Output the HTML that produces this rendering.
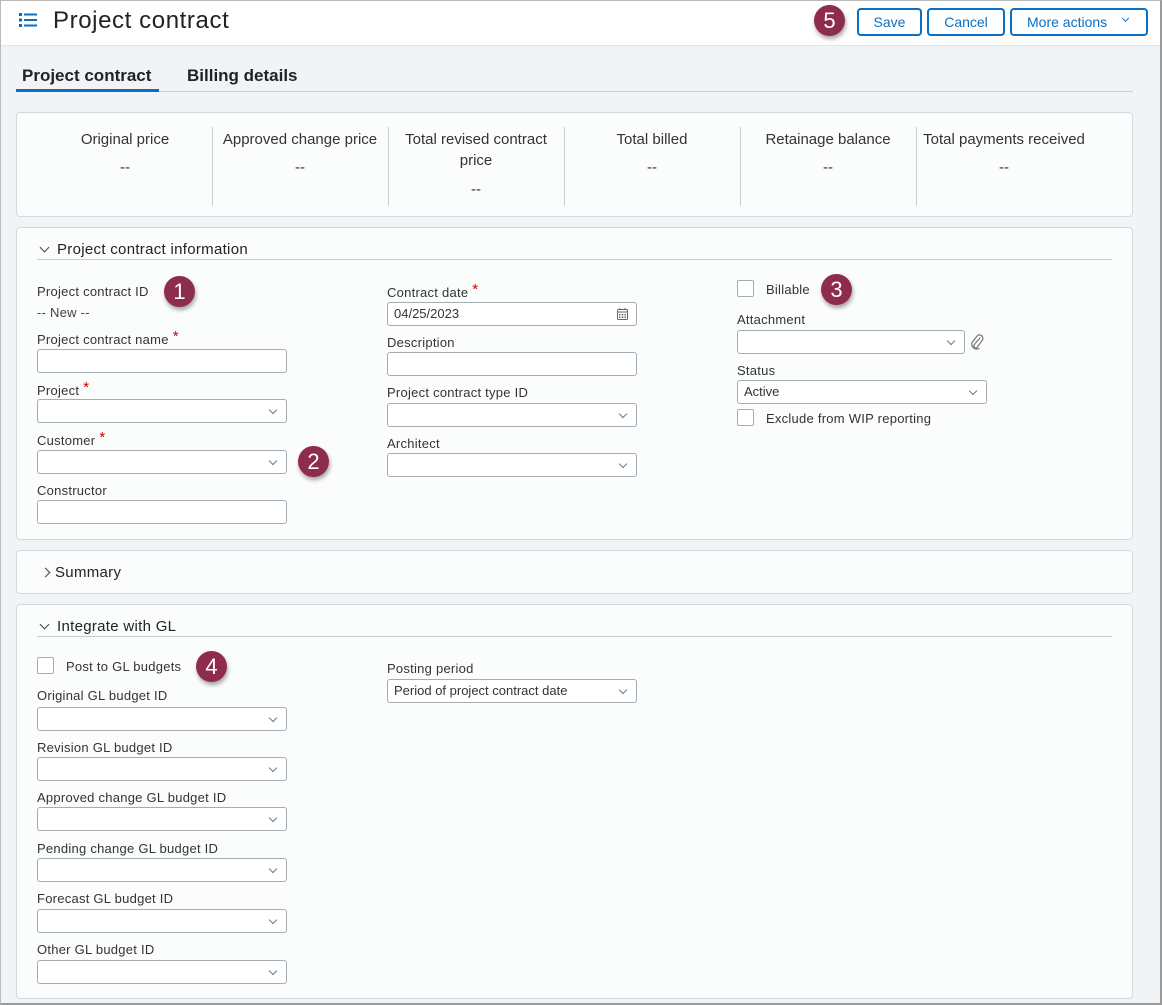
<!DOCTYPE html>
<html><head><meta charset="utf-8"><style>
*{box-sizing:border-box;margin:0;padding:0}
body{width:1162px;height:1005px;background:#f1f4f6;font-family:"Liberation Sans",Arial,sans-serif;color:#333;position:relative;overflow:hidden}
.a{position:absolute}
.frame{position:absolute;left:0;top:0;width:1162px;height:1005px;border-right:2px solid #9a9a9a;border-bottom:2px solid #9a9a9a;border-top:1px solid #bbb;border-left:1px solid #bbb;pointer-events:none;z-index:10}
.hdr{left:0;top:0;width:1162px;height:46px;background:#fff;border-bottom:1px solid #e1e5e8}
.card{background:#fbfcfc;border:1px solid #d3d9de;border-radius:4px}
.btn{top:8px;height:28px;border:2px solid #0a6fc2;border-radius:4px;color:#0a6fc2;font-size:14px;line-height:24px;text-align:center;background:#fff}
.lbl{font-size:13px;color:#333;white-space:nowrap;letter-spacing:0.25px}
.req{color:#c00;font-size:15px;margin-left:4px;position:relative;top:-3px}
.in{width:250px;height:24px;border:1px solid #a4adb5;border-radius:3px;background:#fff;font-size:13px;line-height:22px;padding-left:6px}
.sel::after{content:"";position:absolute;right:10px;top:7px;width:5px;height:5px;border-right:1px solid #777;border-bottom:1px solid #777;transform:rotate(45deg)}
.cb{width:17px;height:17px;border:1px solid #a4adb5;background:#fff;border-radius:2px}
.badge{width:31px;height:31px;border-radius:50%;background:#8e2c4c;color:#fff;font-size:22px;line-height:31px;text-align:center;box-shadow:1px 3px 4px rgba(0,0,0,.35)}
.sum{font-size:15px;color:#333;text-align:center;width:176px}
.vd{width:1px;background:#c8cdd1;top:127px;height:79px}
.sec{font-size:15px;color:#222;letter-spacing:0.3px}
.hr{height:1px;background:#c8cdd1}
.chev{display:inline-block;width:7px;height:7px;border-right:1.3px solid #444;border-bottom:1.3px solid #444;transform:rotate(45deg);margin-right:9px;position:relative;top:-3px}
.chevr{display:inline-block;width:7px;height:7px;border-right:1.3px solid #444;border-bottom:1.3px solid #444;transform:rotate(-45deg);margin-right:6px;position:relative;top:-1px}
.tab{font-size:17px;color:#222;font-weight:bold}
</style></head><body>
<div class="a hdr"></div>
<svg class="a" style="left:19px;top:12px" width="19" height="16" viewBox="0 0 19 16"><g fill="#0a6fc2"><rect x="0" y="1" width="3" height="3"/><rect x="5" y="1.5" width="13" height="2"/><rect x="0" y="6.5" width="3" height="3"/><rect x="5" y="7" width="13" height="2"/><rect x="0" y="12" width="3" height="3"/><rect x="5" y="12.5" width="13" height="2"/></g></svg>
<div class="a" style="left:53px;top:7px;font-size:24px;color:#222;letter-spacing:0.6px">Project contract</div>
<div class="a badge" style="left:814px;top:5px">5</div>
<div class="a btn" style="left:857px;width:65px">Save</div>
<div class="a btn" style="left:927px;width:78px">Cancel</div>
<div class="a btn" style="left:1010px;width:138px;text-align:left;padding-left:15px">More actions<span style="position:absolute;right:18px;top:6px;width:5px;height:5px;border-right:1px solid #0a6fc2;border-bottom:1px solid #0a6fc2;transform:rotate(45deg)"></span></div>

<div class="a tab" style="left:22px;top:66px">Project contract</div>
<div class="a tab" style="left:187px;top:66px">Billing details</div>
<div class="a" style="left:16px;top:91px;width:1117px;height:1px;background:#c8cdd1"></div>
<div class="a" style="left:16px;top:89px;width:143px;height:3px;background:#0a6fc2"></div>

<div class="a card" style="left:16px;top:112px;width:1117px;height:105px"></div>
<div class="a sum" style="left:37px;top:131px">Original price</div>
<div class="a sum" style="left:212px;top:131px">Approved change price</div>
<div class="a sum" style="left:388px;top:129px;line-height:21px">Total revised contract<br>price</div>
<div class="a sum" style="left:564px;top:131px">Total billed</div>
<div class="a sum" style="left:740px;top:131px">Retainage balance</div>
<div class="a sum" style="left:916px;top:131px">Total payments received</div>
<div class="a sum" style="left:37px;top:159px">--</div>
<div class="a sum" style="left:212px;top:159px">--</div>
<div class="a sum" style="left:388px;top:181px">--</div>
<div class="a sum" style="left:564px;top:159px">--</div>
<div class="a sum" style="left:740px;top:159px">--</div>
<div class="a sum" style="left:916px;top:159px">--</div>
<div class="a vd" style="left:212px"></div><div class="a vd" style="left:388px"></div><div class="a vd" style="left:564px"></div><div class="a vd" style="left:740px"></div><div class="a vd" style="left:916px"></div>

<div class="a card" style="left:16px;top:227px;width:1117px;height:313px"></div>
<div class="a sec" style="left:41px;top:241px"><span class="chev"></span>Project contract information</div>
<div class="a hr" style="left:37px;top:259px;width:1075px"></div>

<div class="a lbl" style="left:37px;top:284px">Project contract ID</div>
<div class="a badge" style="left:164px;top:276px">1</div>
<div class="a lbl" style="left:37px;top:305px;color:#444">-- New --</div>
<div class="a lbl" style="left:37px;top:331px">Project contract name<span class="req">*</span></div>
<div class="a in" style="left:37px;top:349px"></div>
<div class="a lbl" style="left:37px;top:382px">Project<span class="req">*</span></div>
<div class="a in sel" style="left:37px;top:399px"></div>
<div class="a lbl" style="left:37px;top:432px">Customer<span class="req">*</span></div>
<div class="a in sel" style="left:37px;top:450px"></div>
<div class="a badge" style="left:298px;top:446px">2</div>
<div class="a lbl" style="left:37px;top:483px">Constructor</div>
<div class="a in" style="left:37px;top:500px"></div>

<div class="a lbl" style="left:387px;top:284px">Contract date<span class="req">*</span></div>
<div class="a in" style="left:387px;top:302px">04/25/2023
<svg style="position:absolute;right:8px;top:5px" width="11" height="12" viewBox="0 0 11 12"><rect x="0.5" y="1.5" width="10" height="10" rx="1" fill="none" stroke="#666"/><line x1="0.5" y1="4" x2="10.5" y2="4" stroke="#666"/><line x1="3" y1="0" x2="3" y2="2" stroke="#666"/><line x1="8" y1="0" x2="8" y2="2" stroke="#666"/><g fill="#666"><rect x="2" y="6" width="1.5" height="1.5"/><rect x="4.8" y="6" width="1.5" height="1.5"/><rect x="7.5" y="6" width="1.5" height="1.5"/><rect x="2" y="8.5" width="1.5" height="1.5"/><rect x="4.8" y="8.5" width="1.5" height="1.5"/><rect x="7.5" y="8.5" width="1.5" height="1.5"/></g></svg></div>
<div class="a lbl" style="left:387px;top:335px">Description</div>
<div class="a in" style="left:387px;top:352px"></div>
<div class="a lbl" style="left:387px;top:385px">Project contract type ID</div>
<div class="a in sel" style="left:387px;top:403px"></div>
<div class="a lbl" style="left:387px;top:436px">Architect</div>
<div class="a in sel" style="left:387px;top:453px"></div>

<div class="a cb" style="left:737px;top:280px"></div>
<div class="a lbl" style="left:766px;top:282px">Billable</div>
<div class="a badge" style="left:821px;top:274px">3</div>
<div class="a lbl" style="left:737px;top:312px">Attachment</div>
<div class="a in sel" style="left:737px;top:330px;width:228px"></div>
<svg class="a" style="left:969px;top:333px" width="16" height="18" viewBox="0 0 16 18"><path d="M11 5 L5 12 a2 2 0 0 0 3 2.5 L13.5 7 a3.5 3.5 0 0 0 -5 -4.5 L3 9.5 a5 5 0 0 0 7 6" fill="none" stroke="#777" stroke-width="1.2" stroke-linecap="round"/></svg>
<div class="a lbl" style="left:737px;top:363px">Status</div>
<div class="a in sel" style="left:737px;top:380px">Active</div>
<div class="a cb" style="left:737px;top:409px"></div>
<div class="a lbl" style="left:766px;top:411px">Exclude from WIP reporting</div>

<div class="a card" style="left:16px;top:550px;width:1117px;height:44px"></div>
<div class="a sec" style="left:42px;top:564px"><span class="chevr"></span>Summary</div>

<div class="a card" style="left:16px;top:604px;width:1117px;height:395px"></div>
<div class="a sec" style="left:41px;top:618px"><span class="chev"></span>Integrate with GL</div>
<div class="a hr" style="left:37px;top:636px;width:1075px"></div>

<div class="a cb" style="left:37px;top:657px"></div>
<div class="a lbl" style="left:66px;top:659px">Post to GL budgets</div>
<div class="a badge" style="left:196px;top:651px">4</div>
<div class="a lbl" style="left:37px;top:688px">Original GL budget ID</div>
<div class="a in sel" style="left:37px;top:707px"></div>
<div class="a lbl" style="left:37px;top:740px">Revision GL budget ID</div>
<div class="a in sel" style="left:37px;top:757px"></div>
<div class="a lbl" style="left:37px;top:790px">Approved change GL budget ID</div>
<div class="a in sel" style="left:37px;top:807px"></div>
<div class="a lbl" style="left:37px;top:841px">Pending change GL budget ID</div>
<div class="a in sel" style="left:37px;top:858px"></div>
<div class="a lbl" style="left:37px;top:891px">Forecast GL budget ID</div>
<div class="a in sel" style="left:37px;top:909px"></div>
<div class="a lbl" style="left:37px;top:942px">Other GL budget ID</div>
<div class="a in sel" style="left:37px;top:960px"></div>

<div class="a lbl" style="left:387px;top:661px">Posting period</div>
<div class="a in sel" style="left:387px;top:679px">Period of project contract date</div>

<div class="frame"></div>
</body></html>
